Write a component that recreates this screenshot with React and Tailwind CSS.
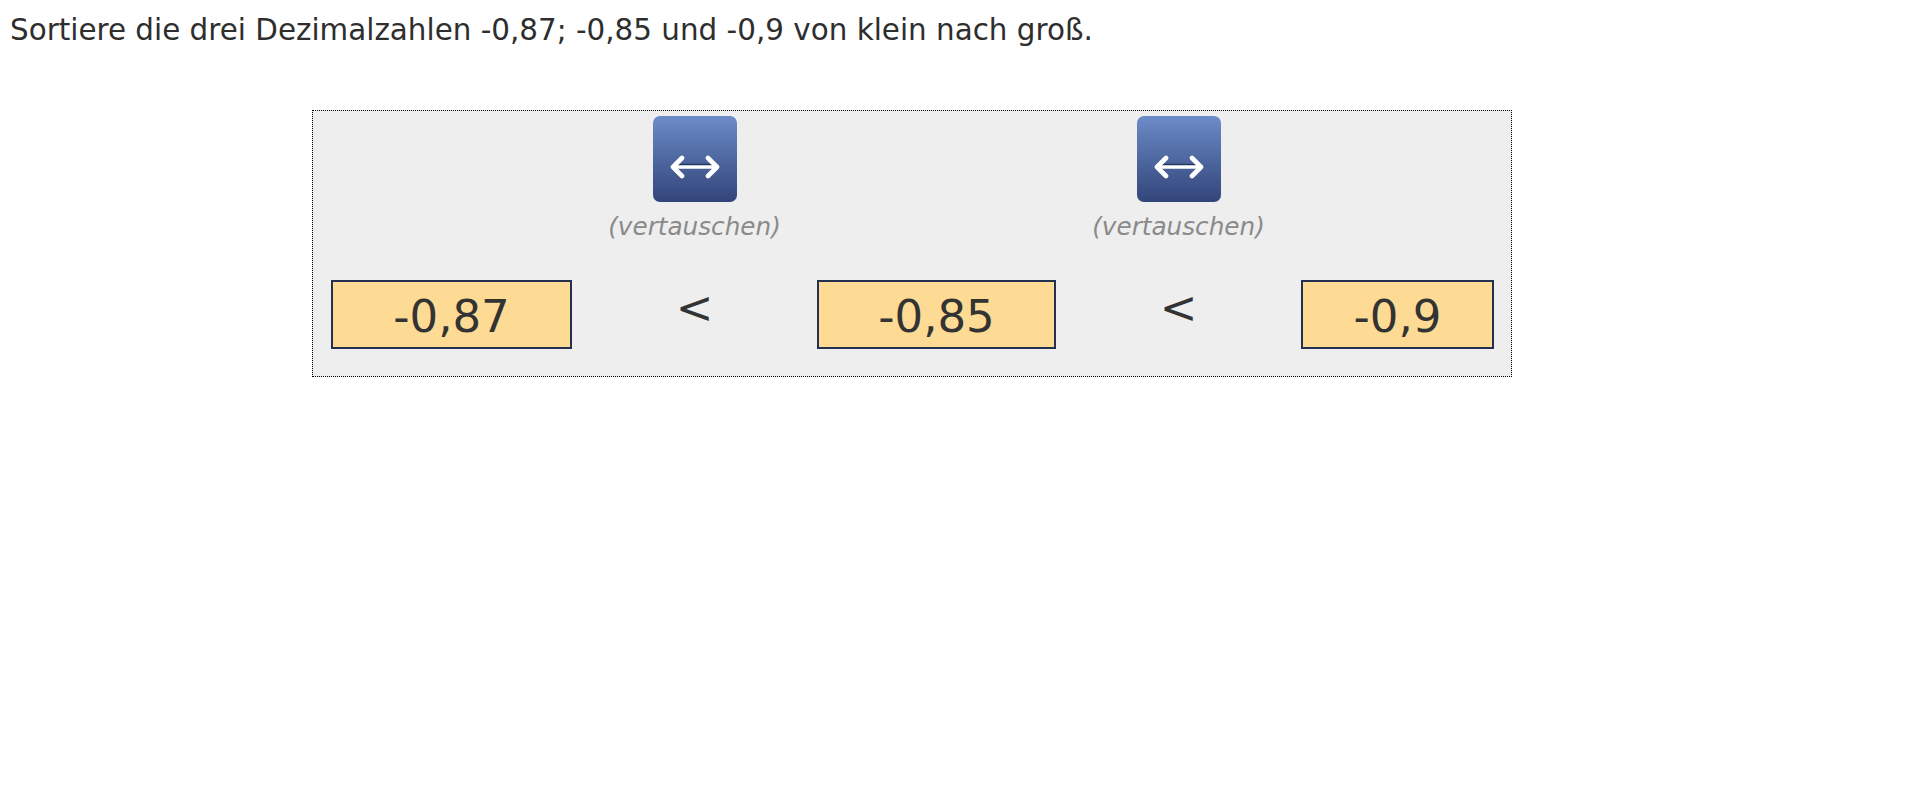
import React from "react";

const font = { fontFamily: '"DejaVu Sans", Verdana, sans-serif' };

// swap button with the double arrow
function SwapButton() {
  return (
    <div className="flex flex-col items-center">
      <button className="w-[84px] h-[86px] rounded-[7px] bg-linear-to-b from-[#6d8cc8] to-[#32457a] flex justify-center items-start pt-[39px]">
        <svg width="52" height="24" viewBox="0 0 52 24" fill="none">
          <g stroke="#1c2a50" strokeOpacity="0.8" transform="translate(0,-1.6)">
            <path d="M6 12 H46" strokeWidth="3.4" />
          </g>
          <g stroke="#ffffff" strokeLinecap="round" strokeLinejoin="round">
            <path d="M5 12 H47" strokeWidth="3.6" strokeLinecap="butt" />
            <path d="M13 3 L4 12 L13 21" strokeWidth="4.6" />
            <path d="M39 3 L48 12 L39 21" strokeWidth="4.6" />
          </g>
        </svg>
      </button>
      <span className="mt-[6px] text-[24.7px] italic text-[#8a8a8a]">(vertauschen)</span>
    </div>
  );
}

function NumberBox({ value, width }) {
  return (
    <div
      className={`${width} h-[69px] border-2 border-[#24304f] bg-[#fddb94] flex items-center justify-center pt-1 text-[45px] text-[#333333]`}
    >
      {value}
    </div>
  );
}

function Less() {
  return (
    <div className="flex justify-center -mt-[6px] text-[45px] text-[#333333]">&lt;</div>
  );
}

export default function App() {
  return (
    <div className="min-h-[810px] bg-white" style={font}>
      <p className="pl-[10px] pt-[13px] text-[29.4px] leading-[34px] text-[#2e2e2e]">
        Sortiere die drei Dezimalzahlen -0,87; -0,85 und -0,9 von klein nach groß.
      </p>

      <div className="ml-[312px] mt-[63px] w-[1200px] border border-dotted border-black bg-[#eeeeee] pl-[18px] pt-[5px] pb-[27px]">
        <div className="grid grid-cols-[241px_245px_239px_245px_193px]">
          <div />
          <SwapButton />
          <div />
          <SwapButton />
          <div />
        </div>

        <div className="mt-[35px] grid grid-cols-[241px_245px_239px_245px_193px] items-start">
          <NumberBox value="-0,87" width="w-[241px]" />
          <Less />
          <NumberBox value="-0,85" width="w-[239px]" />
          <Less />
          <NumberBox value="-0,9" width="w-[193px]" />
        </div>
      </div>
    </div>
  );
}
